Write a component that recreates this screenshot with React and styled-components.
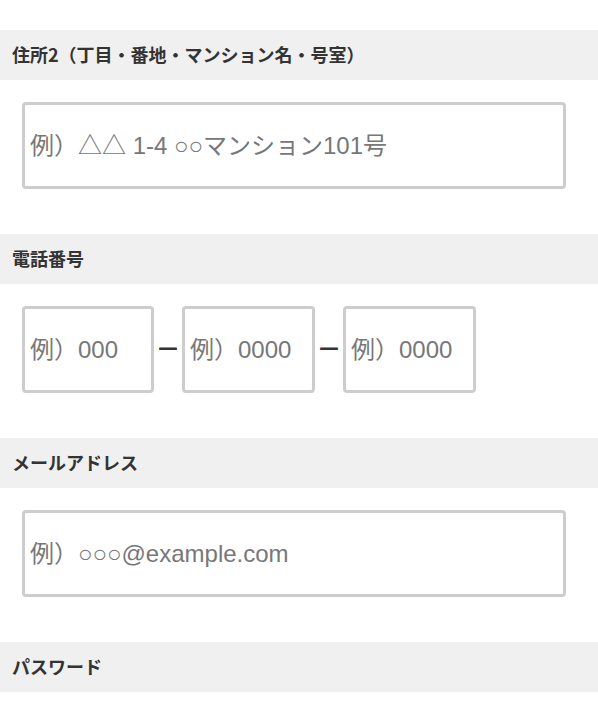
import React from "react";
import styled, { createGlobalStyle } from "styled-components";

const Global = createGlobalStyle`
  html, body { margin: 0; padding: 0; background: #fff; }
  body {
    font-family: "Liberation Sans", "Noto Sans CJK JP", sans-serif;
    color: #333;
  }
  * { box-sizing: border-box; }
`;

const Form = styled.form`
  padding-top: 30px;
`;

const Section = styled.section`
  display: flex;
  flex-direction: column;
`;

const Heading = styled.h3`
  margin: 0;
  height: 50px;
  padding: 0 12px 2px;
  display: flex;
  align-items: center;
  background: #f0f0f0;
  font-family: "Noto Sans CJK JP", sans-serif;
  font-size: 18px;
  font-weight: 700;
  color: #333;
`;

const Body = styled.div`
  padding: 22px 22px 45px;
  display: flex;
  align-items: center;
`;

const Input = styled.input`
  width: ${(p) => p.$w}px;
  height: 87px;
  border: 3px solid #cdcdcd;
  border-radius: 4px;
  padding: 0 5px;
  font-family: "Liberation Sans", "Noto Sans CJK JP", sans-serif;
  font-size: 24px;
  color: #333;
  background: #fff;
  outline: none;
  &::placeholder {
    color: #777;
    opacity: 1;
  }
`;

const Dash = styled.span`
  width: 28px;
  display: flex;
  justify-content: center;
  font-family: "Noto Sans CJK JP", sans-serif;
  font-size: 22px;
  font-weight: 500;
  color: #333;
  margin-top: -6px;
`;

export default function App() {
  return (
    <>
      <Global />
      <Form>
        <Section>
          <Heading>住所2（丁目・番地・マンション名・号室）</Heading>
          <Body>
            <Input $w={544} placeholder="例）△△ 1-4 ○○マンション101号" />
          </Body>
        </Section>
        <Section>
          <Heading>電話番号</Heading>
          <Body>
            <Input $w={132} placeholder="例）000" />
            <Dash>ー</Dash>
            <Input $w={133} placeholder="例）0000" />
            <Dash>ー</Dash>
            <Input $w={133} placeholder="例）0000" />
          </Body>
        </Section>
        <Section>
          <Heading>メールアドレス</Heading>
          <Body>
            <Input $w={544} placeholder="例）○○○@example.com" />
          </Body>
        </Section>
        <Section>
          <Heading>パスワード</Heading>
          <Body>
            <Input $w={544} type="password" placeholder="" />
          </Body>
        </Section>
      </Form>
    </>
  );
}
